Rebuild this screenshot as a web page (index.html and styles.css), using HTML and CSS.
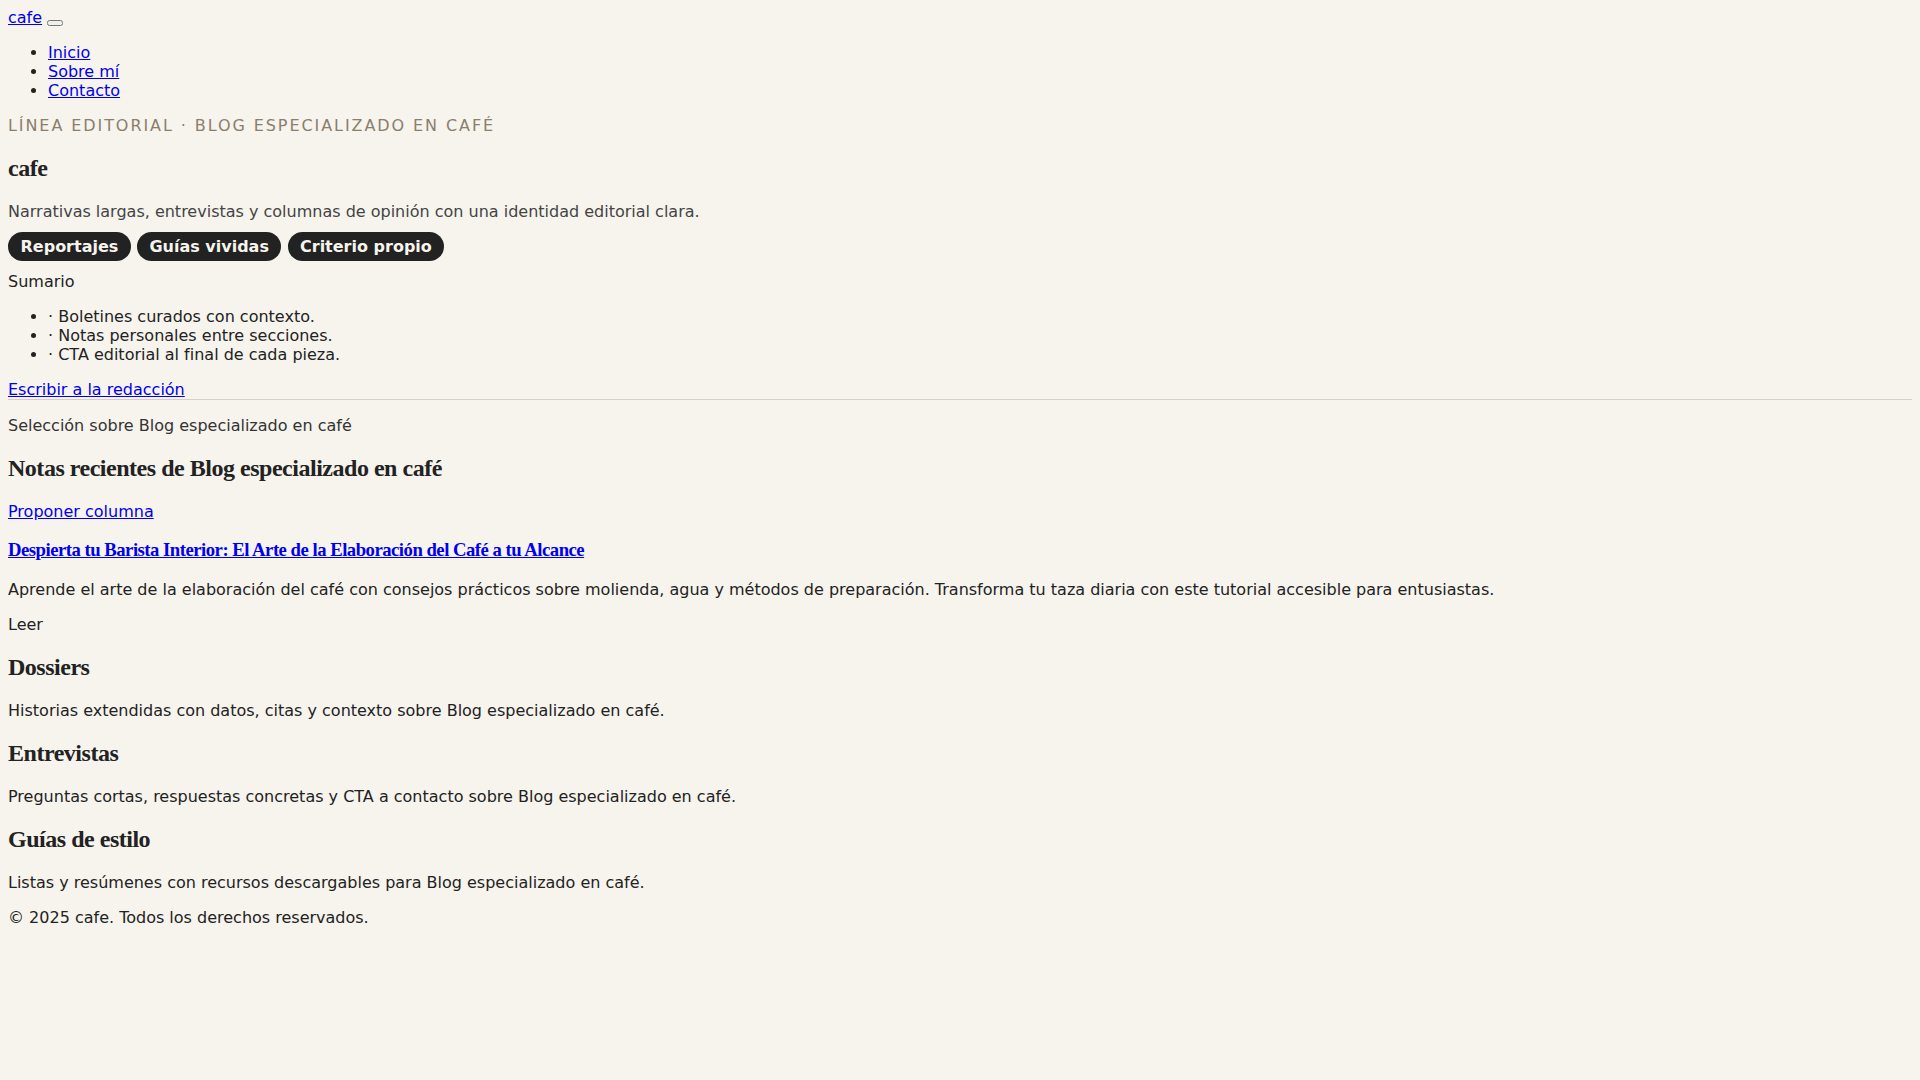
FILE: index.html
```html
<!DOCTYPE html>
<html lang="es">
<head>
<meta charset="utf-8">
<title>cafe</title>
<link rel="stylesheet" href="styles.css">
</head>
<body>
<header class="site-header">
  <div class="brand-row"><a class="brand" href="#">cafe</a> <button class="menu-toggle" type="button" aria-label="Menú"></button></div>
  <nav class="site-nav">
    <ul class="nav-list">
      <li><a href="#">Inicio</a></li>
      <li><a href="#">Sobre mí</a></li>
      <li><a href="#">Contacto</a></li>
    </ul>
  </nav>
</header>
<main>
  <section class="hero">
    <p class="kicker">Línea editorial · Blog especializado en café</p>
    <h1 class="hero-title">cafe</h1>
    <p class="lead">Narrativas largas, entrevistas y columnas de opinión con una identidad editorial clara.</p>
    <div class="chips"><span class="chip">Reportajes</span> <span class="chip">Guías vividas</span> <span class="chip">Criterio propio</span></div>
    <p class="summary-label">Sumario</p>
    <ul class="summary">
      <li>· Boletines curados con contexto.</li>
      <li>· Notas personales entre secciones.</li>
      <li>· CTA editorial al final de cada pieza.</li>
    </ul>
    <div class="hero-cta"><a href="#">Escribir a la redacción</a></div>
  </section>
  <section class="recent">
    <p class="eyebrow">Selección sobre Blog especializado en café</p>
    <h2 class="section-title">Notas recientes de Blog especializado en café</h2>
    <p class="section-cta"><a href="#">Proponer columna</a></p>
    <article class="post">
      <h3 class="post-title"><a href="#">Despierta tu Barista Interior: El Arte de la Elaboración del Café a tu Alcance</a></h3>
      <p class="post-excerpt">Aprende el arte de la elaboración del café con consejos prácticos sobre molienda, agua y métodos de preparación. Transforma tu taza diaria con este tutorial accesible para entusiastas.</p>
      <p class="post-read">Leer</p>
    </article>
  </section>
  <section class="topic">
    <h2 class="section-title">Dossiers</h2>
    <p class="topic-text">Historias extendidas con datos, citas y contexto sobre Blog especializado en café.</p>
  </section>
  <section class="topic">
    <h2 class="section-title">Entrevistas</h2>
    <p class="topic-text">Preguntas cortas, respuestas concretas y CTA a contacto sobre Blog especializado en café.</p>
  </section>
  <section class="topic">
    <h2 class="section-title">Guías de estilo</h2>
    <p class="topic-text">Listas y resúmenes con recursos descargables para Blog especializado en café.</p>
  </section>
</main>
<footer class="site-footer">
  <p class="copyright">© 2025 cafe. Todos los derechos reservados.</p>
</footer>
</body>
</html>
```
FILE: styles.css
```css
html {
  background: #f7f4ee;
}

body {
  margin: 8px;
  background: #f7f4ee;
  color: #222222;
  font-family: "DejaVu Sans", sans-serif;
  font-size: 16px;
}

a {
  color: #0000ee;
}

.nav-list {
  margin: 16px 0;
  padding-left: 40px;
}

.kicker {
  margin: 16px 0;
  color: #8a7e6c;
  text-transform: uppercase;
  letter-spacing: 0.12em;
}

.hero-title,
.section-title,
.post-title {
  font-family: "Liberation Serif", serif;
  font-weight: 700;
  letter-spacing: -0.02em;
  color: #222222;
}

.hero-title,
.section-title {
  font-size: 24px;
  margin: 0.83em 0;
}

.post-title {
  font-size: 18.72px;
  margin: 1em 0;
  letter-spacing: -0.027em;
}

.post-title a {
  color: #0000ee;
}

.lead {
  margin: 16px 0;
  color: #444444;
}

.chips {
  margin: 16px 0;
}

.chip {
  display: inline;
  margin: 0 1px 0 0;
  background: #222222;
  color: #f7f4ee;
  font-weight: 700;
  padding: 5px 12.5px;
  border-radius: 999px;
}

.summary-label {
  margin: 16px 0;
}

.summary {
  margin: 16px 0;
  padding-left: 40px;
}

.hero {
  border-bottom: 1px solid #d6cfc3;
}

.eyebrow {
  margin: 16px 0;
  color: #333333;
}

.section-cta,
.post-excerpt,
.post-read,
.topic-text,
.copyright {
  margin: 16px 0;
}
```
